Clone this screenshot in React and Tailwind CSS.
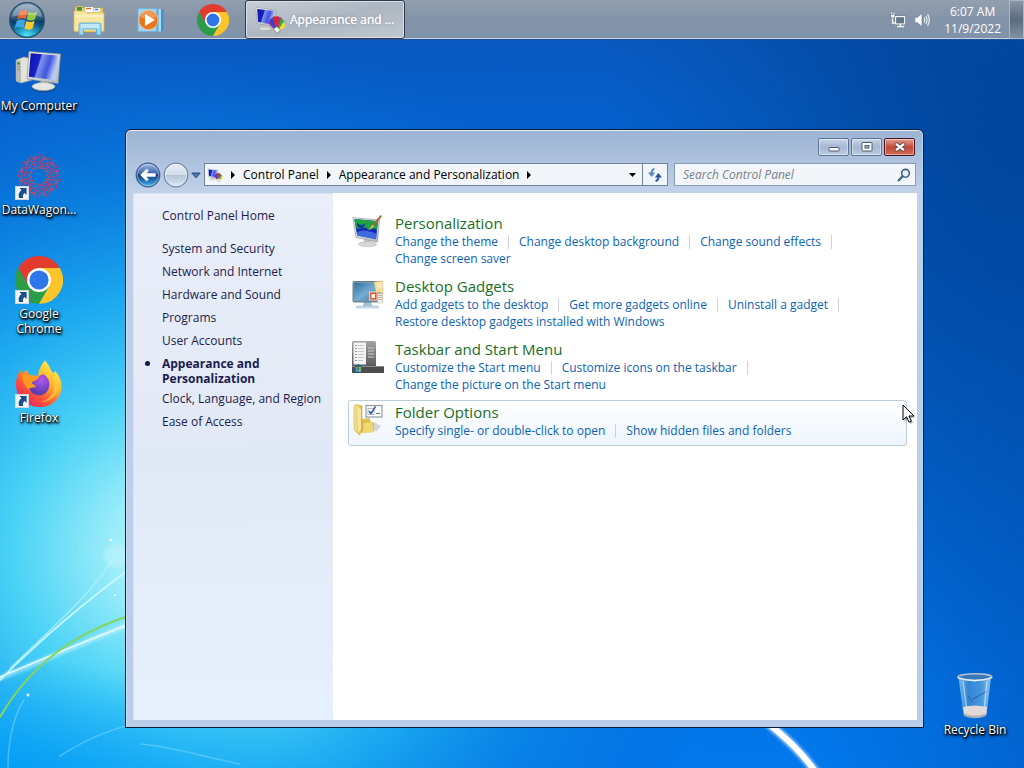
import clsx from 'clsx';

const sidebarLinks = [
	{ label: 'System and Security' },
	{ label: 'Network and Internet' },
	{ label: 'Hardware and Sound' },
	{ label: 'Programs' },
	{ label: 'User Accounts' },
	{ label: 'Appearance and Personalization', active: true },
	{ label: 'Clock, Language, and Region' },
	{ label: 'Ease of Access' }
];

const categories = [
	{
		title: 'Personalization',
		icon: PersonalizationIcon,
		links: ['Change the theme', 'Change desktop background', 'Change sound effects', 'Change screen saver']
	},
	{
		title: 'Desktop Gadgets',
		icon: GadgetsIcon,
		links: [
			'Add gadgets to the desktop',
			'Get more gadgets online',
			'Uninstall a gadget',
			'Restore desktop gadgets installed with Windows'
		]
	},
	{
		title: 'Taskbar and Start Menu',
		icon: TaskbarIcon,
		links: ['Customize the Start menu', 'Customize icons on the taskbar', 'Change the picture on the Start menu']
	},
	{
		title: 'Folder Options',
		icon: FolderOptionsIcon,
		links: ['Specify single- or double-click to open', 'Show hidden files and folders'],
		hovered: true
	}
];

const shortcuts = [
	{ label: 'My Computer', icon: ComputerIcon },
	{ label: 'DataWagon...', icon: DataWagonIcon, shortcut: true },
	{ label: 'Google Chrome', icon: ChromeIcon, shortcut: true },
	{ label: 'Firefox', icon: FirefoxIcon, shortcut: true }
];

function Wallpaper() {
	return (
		<svg className="absolute inset-0 h-full w-full" viewBox="0 0 1024 768" preserveAspectRatio="none" aria-hidden="true">
			<defs>
				<linearGradient id="wpBase" x1="0" y1="0" x2="0" y2="1">
					<stop offset="0" stopColor="#0a54b8" />
					<stop offset="0.15" stopColor="#0660cc" />
					<stop offset="0.6" stopColor="#046cdc" />
					<stop offset="1" stopColor="#0278ec" />
				</linearGradient>
				<radialGradient id="wpRight" gradientUnits="userSpaceOnUse" cx="0" cy="0" r="1" gradientTransform="translate(1024 130) scale(420 560)">
					<stop offset="0" stopColor="#003a84" stopOpacity="0.8" />
					<stop offset="0.5" stopColor="#00408e" stopOpacity="0.45" />
					<stop offset="1" stopColor="#00489c" stopOpacity="0" />
				</radialGradient>
				<linearGradient id="wpEdge" x1="0" y1="0" x2="1" y2="0">
					<stop offset="0.8" stopColor="#0048a8" stopOpacity="0" />
					<stop offset="1" stopColor="#0048a8" stopOpacity="0.4" />
				</linearGradient>
				<radialGradient id="wpGlow" gradientUnits="userSpaceOnUse" cx="0" cy="0" r="1" gradientTransform="translate(180 550) scale(560 520)">
					<stop offset="0" stopColor="#c4f8fc" />
					<stop offset="0.13" stopColor="#98ecf9" />
					<stop offset="0.3" stopColor="#4ad2f6" />
					<stop offset="0.5" stopColor="#1eaef2" stopOpacity="0.9" />
					<stop offset="0.72" stopColor="#0c88e4" stopOpacity="0.6" />
					<stop offset="1" stopColor="#0a66d0" stopOpacity="0" />
				</radialGradient>
				<radialGradient id="wpFloor" gradientUnits="userSpaceOnUse" cx="0" cy="0" r="1" gradientTransform="translate(0 790) scale(330 130)">
					<stop offset="0" stopColor="#009cf8" stopOpacity="0.9" />
					<stop offset="1" stopColor="#00a0f8" stopOpacity="0" />
				</radialGradient>
				<filter id="wpSoft" x="-20%" y="-20%" width="140%" height="140%">
					<feGaussianBlur stdDeviation="1.4" />
				</filter>
			</defs>
			<rect width="1024" height="768" fill="url(#wpBase)" />
			<rect width="1024" height="768" fill="url(#wpRight)" />
			<rect width="1024" height="768" fill="url(#wpEdge)" />
			<rect width="1024" height="768" fill="url(#wpGlow)" />
			<rect width="1024" height="768" fill="url(#wpFloor)" />
			<g fill="none" strokeLinecap="round">
				<path d="M0 678 C40 662 90 640 135 622" stroke="#dffbff" strokeWidth="5" opacity="0.5" filter="url(#wpSoft)" />
				<path d="M0 677 C40 660 90 639 135 622" stroke="#e4faff" strokeWidth="1.6" />
				<path d="M0 680 C40 640 90 598 135 565" stroke="#d4f8ff" strokeWidth="1.8" opacity="0.9" />
				<path d="M10 668 C50 630 95 590 112 560" stroke="#bdf2fc" strokeWidth="1.5" opacity="0.7" />
				<path d="M0 717 C30 666 72 633 135 614" stroke="#86d45c" strokeWidth="2" />
				<path d="M60 756 C85 740 105 731 140 722 M8 768 C8 740 14 715 24 700" stroke="#7fdcfb" strokeWidth="1.5" opacity="0.5" />
				<path d="M140 744 C170 746 200 756 240 764" stroke="#7fdcfb" strokeWidth="1.5" opacity="0.5" />
				<path d="M764 720 C785 737 802 752 817 774" stroke="#fff" strokeWidth="9" opacity="0.6" filter="url(#wpSoft)" />
				<path d="M764 720 C785 737 802 752 817 774" stroke="#fff" strokeWidth="6" />
			</g>
			<circle cx="116" cy="556" r="12" fill="#e8fdff" opacity="0.25" filter="url(#wpSoft)" />
			<g fill="#e8fdff">
				<circle cx="111" cy="540" r="1.5" />
				<circle cx="115" cy="595" r="1" />
				<circle cx="28" cy="695" r="1.5" />
			</g>
		</svg>
	);
}

function WindowsOrb() {
	return (
		<svg className="h-9 w-9" viewBox="0 0 36 36" aria-hidden="true">
			<defs>
				<linearGradient id="orbBody" x1="0" y1="0" x2="0" y2="1">
					<stop offset="0" stopColor="#8fa9bb" />
					<stop offset="0.45" stopColor="#2b5878" />
					<stop offset="0.55" stopColor="#0c4068" />
					<stop offset="1" stopColor="#0d7fae" />
				</linearGradient>
				<radialGradient id="orbGlow" cx="0.5" cy="1" r="0.55">
					<stop offset="0" stopColor="#58efff" />
					<stop offset="1" stopColor="#2cb8e0" stopOpacity="0" />
				</radialGradient>
			</defs>
			<circle cx="18" cy="18" r="17.3" fill="url(#orbBody)" stroke="#24506c" strokeWidth="1.2" />
			<circle cx="18" cy="18" r="16.5" fill="url(#orbGlow)" />
			<path d="M10.8 9.6 C13 7.6 15.8 7.7 18.4 9.2 L16.6 17 C13.8 15.6 11.2 15.7 8.2 17.4 Z" fill="#f0632c" />
			<path d="M19.6 9.8 C22.2 11.4 25 11.2 28.2 9.4 L26 17.2 C23 18.9 20.4 18.9 17.8 17.5 Z" fill="#94ca3c" />
			<path d="M7.8 18.8 C10.8 17 13.5 17 16.3 18.4 L14.4 26 C11.8 24.6 9 24.6 5.8 26.2 Z" fill="#41a4e8" />
			<path d="M17.4 18.9 C20 20.3 22.6 20.3 25.6 18.7 L23.5 26.4 C20.6 28 18 27.9 15.4 26.5 Z" fill="#fdca2e" />
			<path d="M3 15 C4 7 10 2.4 18 2.4 C26 2.4 32 7 33 15 C24 12 12 12 3 15 Z" fill="#fff" opacity="0.28" />
		</svg>
	);
}

function ExplorerIcon() {
	return (
		<svg className="h-8 w-8" viewBox="0 0 32 32" aria-hidden="true">
			<path d="M2 4 L4 2 H9 L11 4 H30 V28 H2 Z" fill="#eccf74" stroke="#c9a545" strokeWidth="0.7" />
			<path d="M4 3 H9 V7 H4 Z" fill="#3a9a4a" />
			<path d="M12 3 H20 V8 H12 Z" fill="#fff" />
			<path d="M13 3.8 H18 V5.2 H13 Z" fill="#e0683c" />
			<path d="M21 4 H27 V8 H21 Z" fill="#dff0fb" />
			<path d="M22 4.8 H25 V6.2 H22 Z" fill="#3a86d0" />
			<path d="M1 7 H12 L14 9 H31 V27 H1 Z" fill="#f8e7a2" stroke="#dcbd62" strokeWidth="0.7" />
			<path d="M2 12 H30" stroke="#fff8d6" />
			<path d="M6 21 Q6 19 8 19 H26 Q28 19 28 21 V31 H23.5 V25 H10.5 V31 H6 Z" fill="#9bd8f2" stroke="#4fa6cf" strokeWidth="0.8" />
			<path d="M8 21 H26 M8 23 H26" stroke="#e4f8ff" strokeWidth="1" />
		</svg>
	);
}

function MediaPlayerIcon() {
	return (
		<svg className="h-7 w-7" viewBox="0 0 28 28" aria-hidden="true">
			<path d="M20 3.5 H26.5 V25 H20 Z" fill="#3f93d4" />
			<path d="M18 3 H24 V25.5 H18 Z" fill="#a9dbf5" />
			<path d="M17 2.5 H21.5 V26 H17 Z" fill="#5aade2" />
			<rect x="1" y="2.5" width="18.5" height="23" fill="#a6d3ee" stroke="#6fb2dc" strokeWidth="0.8" />
			<circle cx="11.5" cy="14" r="9.6" fill="#e8761f" stroke="#f6b27a" strokeWidth="1" />
			<path d="M3 11 A9 9 0 0 1 20 11 Q11 15 3 11Z" fill="#fff" opacity="0.25" />
			<path d="M8 8 L18 14 L8 20 Z" fill="#fff" />
		</svg>
	);
}

function ChromeIcon({ className = 'h-12 w-12' }) {
	return (
		<svg className={className} viewBox="0 0 48 48" aria-hidden="true">
			<path d="M24 24 L44.8 12 A24 24 0 0 0 3.2 12 L13.6 30 Z" fill="#e33b2e" />
			<path d="M24 24 L13.6 30 L3.2 12 A24 24 0 0 0 24 48 L34.4 30 Z" fill="#2b9c48" />
			<path d="M24 12 H44.8 A24 24 0 0 1 24 48 L34.4 30 Z" fill="#fcc62b" />
			<circle cx="24" cy="24" r="12" fill="#fff" />
			<circle cx="24" cy="24" r="9.6" fill="#2f76e8" />
		</svg>
	);
}

function FirefoxIcon() {
	return (
		<svg className="h-12 w-12" viewBox="0 0 48 48" aria-hidden="true">
			<defs>
				<linearGradient id="ffBody" x1="0.85" y1="0.1" x2="0.2" y2="0.95">
					<stop offset="0" stopColor="#fff04a" />
					<stop offset="0.35" stopColor="#ffb22e" />
					<stop offset="0.65" stopColor="#ff5b36" />
					<stop offset="1" stopColor="#e8235f" />
				</linearGradient>
				<radialGradient id="ffGlobe" cx="0.6" cy="0.25" r="0.8">
					<stop offset="0" stopColor="#b455f0" />
					<stop offset="1" stopColor="#4b3aa8" />
				</radialGradient>
			</defs>
			<path
				d="M30 0.5 C34 5 35 8 37 12 C38.5 13 40 13.5 40 10.5 C47 18 48.5 29 44 36.5 C39.5 44 32 47.5 23.5 47 C10 46 1 36.5 1 24.5 C1 18 3 13.5 6.3 9.5 C6.3 11.5 6.8 12.6 7.5 13.2 C9 11.5 10.5 10.7 12.6 10 C12.5 11.7 13.2 13.6 15 15.2 C18 15 21 15.4 23 16.5 C23.5 11 25.5 5 30 0.5 Z"
				fill="url(#ffBody)"
			/>
			<path d="M29 14.5 C34 18 36 24 33 30 C30 35.5 24 36.5 19 34 C14.5 31.5 13.5 27 15.2 23 C16 20 20 19.5 23.5 18 C24 15.5 26 14 29 14.5 Z" fill="url(#ffGlobe)" />
			<path d="M7.5 13.4 C12 15 18 15.6 23 16.6 C24.5 20 18.5 20.5 16.5 23 C17.5 24 19.5 24.5 21 26.6 C17.5 29 14 26.5 14 30 C9 25 6 19 7.5 13.4 Z" fill="#ff9a1f" />
			<path d="M30 1 C32 8 38 13 39.5 21 C41.5 31 35 41 24 42 C37 43 45 33 43.5 22 C42.6 17 41 14 40 11.5 C39.6 13.5 38.2 13.4 37 12.4 C35 8 34 5 30 1Z" fill="#ffd43a" opacity="0.65" />
		</svg>
	);
}

function DataWagonIcon() {
	const spokes = Array.from({ length: 12 }, (_, i) => i * 30);
	return (
		<svg className="h-12 w-12" viewBox="0 0 48 48" aria-hidden="true">
			<g fill="none" stroke="#b8406c" strokeWidth="0.9">
				{spokes.map((angle) => (
					<g key={angle} transform={`rotate(${angle} 24 24)`}>
						<path d="M24 17 L21 12 L25 9 L23 4 L28 2.5" />
						<path d="M24 13 L28.5 10.5 L27 6 L30 5" />
						<path d="M20 8 L18.5 4 M22 16 L26 14" stroke="#d84a58" />
						<circle cx="25" cy="9" r="0.9" />
						<circle cx="21.5" cy="6" r="0.7" stroke="#d84a58" />
					</g>
				))}
			</g>
		</svg>
	);
}

function MonitorDefs() {
	return (
		<defs>
			<linearGradient id="screenBlue" x1="0" y1="0" x2="1" y2="0.3">
				<stop offset="0" stopColor="#0d13a8" />
				<stop offset="0.4" stopColor="#1721c4" />
				<stop offset="0.46" stopColor="#7f93ea" />
				<stop offset="0.75" stopColor="#3d55dc" />
				<stop offset="1" stopColor="#b8c8f8" />
			</linearGradient>
			<linearGradient id="bezel" x1="0" y1="0" x2="1" y2="1">
				<stop offset="0" stopColor="#f6f6f2" />
				<stop offset="1" stopColor="#b4b7b8" />
			</linearGradient>
		</defs>
	);
}

function ComputerIcon() {
	return (
		<svg className="h-12 w-12" viewBox="0 0 48 48" aria-hidden="true">
			<MonitorDefs />
			<path d="M1 12 L9 9 L17 11 V32 L6 35 L1 33 Z" fill="#e2e3dd" stroke="#9a9c9a" strokeWidth="0.6" />
			<path d="M1 12 L6 13 V35 L1 33 Z" fill="#b8bbb6" />
			<circle cx="3.4" cy="15.5" r="1.2" fill="#4a8a20" />
			<path d="M2 19 H5 M2 21.5 H5" stroke="#868986" strokeWidth="0.8" />
			<ellipse cx="29" cy="40.5" rx="12" ry="4" fill="#20303f" opacity="0.35" />
			<path d="M26 31 H33 L34 38 H25 Z" fill="#c9cbc8" />
			<ellipse cx="28.5" cy="38.5" rx="11.5" ry="4" fill="#e6e7e2" stroke="#a2a4a2" strokeWidth="0.6" />
			<path d="M14 3.5 L45.5 6 L43 35.5 L12 31 Z" fill="url(#bezel)" stroke="#90949a" strokeWidth="0.7" />
			<path d="M15.7 5.2 L42.6 7.4 L40.4 32.3 L13.8 28.7 Z" fill="url(#screenBlue)" />
		</svg>
	);
}

function PersonalizationIcon() {
	return (
		<svg className="h-8 w-8" viewBox="0 0 32 32" aria-hidden="true">
			<MonitorDefs />
			<path d="M13 22 H18 L19 29 H11 Z" fill="#c2c4c4" />
			<ellipse cx="15.5" cy="29.2" rx="9" ry="2.6" fill="#d9dad8" stroke="#a8aaaa" strokeWidth="0.5" />
			<path d="M0.8 2.5 L27.5 5 L25.5 27 L4 22.5 Z" fill="url(#bezel)" stroke="#8c9094" strokeWidth="0.6" />
			<path d="M2.3 4 L25.8 6.2 L24 24.2 L5.2 20.6 Z" fill="#1525b8" />
			<path d="M2.3 4 L25.8 6.2 L25 15 C21 11 19 17 15.5 14 C12 10.5 9 16 3.8 12.5 Z" fill="#1fa347" />
			<path d="M5 7.5 Q9 12 14 8 L11 13 Q7 14 5 11 Z" fill="#123a9c" />
			<path d="M4.8 17 Q13 13 24.7 19 L24 24.2 L5.2 20.6 Z" fill="#4a7be8" opacity="0.8" />
			<path d="M28.5 0 L30 1.3 L22 11.5 L19.6 13 L20.5 10 Z" fill="#a5683a" />
			<path d="M20.5 10 L22.2 11.3 L16.5 15.3 Z" fill="#f2c25c" />
		</svg>
	);
}

// Monitor with a colour fan, used on the task button and in the address bar
function AppearanceIcon({ className }) {
	return (
		<svg className={className} viewBox="0 0 32 32" aria-hidden="true">
			<MonitorDefs />
			<ellipse cx="11" cy="24.5" rx="6" ry="2" fill="#dcdedb" stroke="#a2a4a2" strokeWidth="0.5" />
			<path d="M9 19 H14 L14.5 24 H8.5 Z" fill="#c4c6c5" />
			<path d="M2 3.5 L22 6 L20 22.5 L3 19.5 Z" fill="url(#bezel)" stroke="#8c9094" strokeWidth="0.5" />
			<path d="M3.2 4.9 L20.5 7 L19 20.7 L4.1 18 Z" fill="url(#screenBlue)" />
			<path d="M23 28 L14 19 L17 14.5 Z" fill="#8a2bb8" />
			<path d="M23 28 L15.5 16 L20 12.5 Z" fill="#2b45d8" />
			<path d="M23 28 L18.5 12.8 L24 12.2 Z" fill="#d8272b" />
			<path d="M23 28 L23 12 L28 14 Z" fill="#c8257c" />
			<path d="M23 28 L27 13.5 L31 18 Z" fill="#35a83a" />
			<path d="M23 28 L30 17 L31 23 Z" fill="#f2df2a" />
			<path d="M19 25 L23 22.5 L26.5 26 L23.5 29.5 Z" fill="#f4f4f4" stroke="#555" strokeWidth="0.6" />
		</svg>
	);
}

function GadgetsIcon() {
	return (
		<svg className="h-8 w-8" viewBox="0 0 32 32" aria-hidden="true">
			<defs>
				<linearGradient id="gadgetScreen" x1="0" y1="0" x2="1" y2="1">
					<stop offset="0" stopColor="#2f6f9f" />
					<stop offset="0.5" stopColor="#76acd0" />
					<stop offset="1" stopColor="#3578ac" />
				</linearGradient>
			</defs>
			<path d="M12 23 H19 L20 28 H11 Z" fill="#9ec4da" />
			<path d="M5 28 H26 L27 30 H4 Z" fill="#cfe1ec" stroke="#8eb2c8" strokeWidth="0.5" />
			<rect x="1" y="3.5" width="29" height="20.5" rx="1" fill="#8fa0ac" stroke="#4f6473" strokeWidth="0.8" />
			<rect x="2.2" y="4.7" width="26.6" height="18" fill="url(#gadgetScreen)" />
			<path d="M22 4 L31 3 V15 L24 14 Z" fill="#f5df9a" stroke="#d8b964" strokeWidth="0.5" />
			<circle cx="28" cy="7" r="3" fill="#f6e9be" />
			<rect x="17.5" y="14" width="7.5" height="8" fill="#e2582a" stroke="#f7e5da" strokeWidth="0.8" />
			<rect x="19.5" y="16" width="3.5" height="4" fill="#fff" />
			<rect x="25.5" y="15.5" width="5" height="9.5" fill="#f2efe6" stroke="#b9b3a0" strokeWidth="0.5" />
			<path d="M26.5 17.5 H29.5 M26.5 19.5 H29.5 M26.5 21.5 H29.5" stroke="#cf8d52" strokeWidth="0.8" />
		</svg>
	);
}

function TaskbarIcon() {
	return (
		<svg className="h-8 w-8" viewBox="0 0 32 32" aria-hidden="true">
			<defs>
				<linearGradient id="menuDark" x1="0" y1="0" x2="0" y2="1">
					<stop offset="0" stopColor="#a3a3a3" />
					<stop offset="1" stopColor="#585858" />
				</linearGradient>
			</defs>
			<path d="M0 1.5 Q0 0 1.5 0 H22.5 Q24 0 24 1.5 V26 H0 Z" fill="url(#menuDark)" />
			<rect x="1.5" y="1.5" width="12.5" height="22" fill="#f4f4f4" />
			<path d="M3 4.5 H5 M3 7.5 H5 M3 10.5 H5 M3 13.5 H5 M3 16.5 H5 M3 19.5 H5" stroke="#8a9aa8" strokeWidth="1.2" />
			<path d="M6 4.5 H12 M6 7.5 H12 M6 10.5 H12 M6 13.5 H12 M6 16.5 H12 M6 19.5 H11" stroke="#c2c2c2" strokeWidth="0.9" />
			<path d="M16 7 H22 M16 10 H22 M16 13 H22 M16 16 H22" stroke="#d6d6d6" strokeWidth="0.9" />
			<rect y="25" width="32" height="7" fill="#4d4d4d" />
			<rect y="25" width="32" height="1" fill="#8c8c8c" />
			<circle cx="6.3" cy="28" r="4.4" fill="#15618c" />
			<path d="M3.6 25.8 H6 V27.8 H3.2 Z" fill="#ec6a33" />
			<path d="M6.6 25.8 H9.2 V27.8 H6.6 Z" fill="#8cc63e" />
			<path d="M3.4 28.4 H6 V30.6 H3.8 Z" fill="#48b0ea" />
			<path d="M6.6 28.4 H9.2 L8.6 30.6 H6.6 Z" fill="#fbd034" />
		</svg>
	);
}

function FolderOptionsIcon() {
	return (
		<svg className="h-8 w-8" viewBox="0 0 32 32" aria-hidden="true">
			<defs>
				<linearGradient id="folderBack" x1="0" y1="0" x2="1" y2="0">
					<stop offset="0" stopColor="#f7e59b" />
					<stop offset="1" stopColor="#d9b53e" />
				</linearGradient>
			</defs>
			<path d="M12 28 L25 27 L29 22 L22 18 Z" fill="#8a8a7a" opacity="0.3" />
			<path d="M10 15 L18 14 L18 17 L22 19 V28 L10 29 Z" fill="#dfc050" />
			<path d="M12 19 L20 18 L22 28 L11 29 Z" fill="#f0d878" />
			<path d="M2 3 Q2 0.5 5 0.5 L10 2 V27 L7.5 31 L4 28 L2 25 Z" fill="url(#folderBack)" stroke="#c6a23a" strokeWidth="0.5" />
			<path d="M5 2 L9 5 V25 L6.5 29 Q5.5 15 5 2Z" fill="#f6e6a0" />
			<rect x="14" y="1.5" width="16" height="11.5" fill="#fdfdfd" stroke="#8d949a" strokeWidth="1.1" />
			<rect x="16" y="4.5" width="6" height="6" fill="#fff" stroke="#9aa7b2" strokeWidth="0.7" />
			<path d="M17 7 L19 9.7 L23.5 2.5" fill="none" stroke="#2c5b9c" strokeWidth="1.5" />
			<path d="M24 9.5 H28" stroke="#6a7076" />
		</svg>
	);
}

function RecycleBinIcon() {
	return (
		<svg className="h-12 w-12" viewBox="0 0 48 48" aria-hidden="true">
			<defs>
				<linearGradient id="binGlass" x1="0" y1="0" x2="1" y2="0">
					<stop offset="0" stopColor="#8cc4ee" />
					<stop offset="0.3" stopColor="#3d8ad4" />
					<stop offset="0.7" stopColor="#519fe2" />
					<stop offset="1" stopColor="#a4d2f4" />
				</linearGradient>
			</defs>
			<path d="M7.5 5 L12.5 43 Q24 48 35.5 43 L40 5 Z" fill="url(#binGlass)" opacity="0.85" />
			<path d="M12 35 Q24 32 36 35 L35.2 42 Q24 47 13 42 Z" fill="#e4d7d8" />
			<path d="M13 41.5 Q24 46 35.4 41.5 L35 44 Q24 48.5 13.2 44 Z" fill="#a8b0b8" />
			<path d="M17 24 L22 30 M22 27 L36 19" stroke="#2a5f9c" strokeWidth="1" fill="none" />
			<path d="M12 9 L16 39" stroke="#d4ebfa" strokeWidth="1.3" opacity="0.7" />
			<path d="M36 9 L33 39" stroke="#d4ebfa" strokeWidth="1.3" opacity="0.7" />
			<ellipse cx="23.8" cy="5" rx="17" ry="3.3" fill="#3a78b8" stroke="#b0c4d4" strokeWidth="1.6" />
			<path d="M7 5.5 Q23.8 12 40.5 5.5" fill="none" stroke="#e9f1f7" strokeWidth="1.3" />
		</svg>
	);
}

function ShortcutArrow() {
	return (
		<svg className="absolute bottom-0 left-0 h-[14px] w-[14px]" viewBox="0 0 14 14" aria-hidden="true">
			<rect x="0.5" y="0.5" width="13" height="13" fill="#f3f6f8" stroke="#d0d8de" />
			<path d="M4.4 2 H11.6 V9 L9.6 7 C8 8.4 7.4 9.8 8.2 12 H4.4 C2.8 9 4 6.3 6.4 4 Z" fill="#1a4f8c" />
		</svg>
	);
}

function NetworkIcon() {
	return (
		<svg className="h-4 w-4" viewBox="0 0 16 16" aria-hidden="true">
			<rect x="4.6" y="3.6" width="11" height="9.4" fill="#3c4856" />
			<rect x="5.5" y="4.5" width="9.2" height="7.5" fill="#66778a" stroke="#f6f8fa" strokeWidth="1.3" />
			<path d="M7 14.6 H14 M10.3 12 V14.6 M2.6 6 V11 H5" stroke="#f6f8fa" strokeWidth="1.3" fill="none" />
			<path d="M0.5 2.2 H5 V4 Q5 6.2 2.7 6.2 Q0.5 6.2 0.5 4 Z" fill="#f6f8fa" stroke="#3c4856" strokeWidth="0.5" />
			<path d="M1.5 0.5 V2.2 M4 0.5 V2.2" stroke="#f6f8fa" strokeWidth="1" />
		</svg>
	);
}

function SpeakerIcon() {
	return (
		<svg className="h-4 w-4" viewBox="0 0 16 16" aria-hidden="true">
			<path d="M0.8 5.3 H3.5 L8 1.3 V14.7 L3.5 10.7 H0.8 Z" fill="#fafbfc" stroke="#56657a" strokeWidth="0.5" />
			<path d="M10 5.5 Q11.5 8 10 10.5 M11.8 3.8 Q14.2 8 11.8 12.2 M13.6 2.2 Q17 8 13.6 13.8" fill="none" stroke="#f1f4f6" strokeWidth="1.1" />
		</svg>
	);
}

function NavOrb({ active }) {
	return (
		<svg className="h-[26px] w-[26px]" viewBox="0 0 26 26" aria-hidden="true">
			<defs>
				<linearGradient id="navBlue" x1="0" y1="0" x2="0" y2="1">
					<stop offset="0" stopColor="#a4bce4" />
					<stop offset="0.45" stopColor="#3563ad" />
					<stop offset="0.5" stopColor="#0f3a84" />
					<stop offset="1" stopColor="#3fb4f0" />
				</linearGradient>
				<linearGradient id="navPale" x1="0" y1="0" x2="0" y2="1">
					<stop offset="0" stopColor="#e6edf6" />
					<stop offset="0.48" stopColor="#d3deeb" />
					<stop offset="0.52" stopColor="#b4c4d8" />
					<stop offset="1" stopColor="#dfe9f3" />
				</linearGradient>
			</defs>
			<circle cx="13" cy="13" r="11.8" fill={active ? 'url(#navBlue)' : 'url(#navPale)'} stroke={active ? '#405f92' : '#7488a4'} strokeWidth="1.2" />
			<circle cx="13" cy="13" r="10.6" fill="none" stroke="#fff" strokeWidth="0.8" opacity="0.5" />
			{active && <path d="M5.2 13 L11.6 6.8 L13.8 8.8 L11.4 11.2 H20.6 V14.8 H11.4 L13.8 17.2 L11.6 19.2 Z" fill="#fff" />}
		</svg>
	);
}

function Crumb({ children }) {
	return (
		<>
			<svg className="h-2 w-1 shrink-0" viewBox="0 0 4 8" aria-hidden="true">
				<path d="M0 0 L4 4 L0 8 Z" fill="#000" />
			</svg>
			{children && (
				<a href="#" className="truncate text-black">
					{children}
				</a>
			)}
		</>
	);
}

function Taskbar() {
	return (
		<header className="relative z-10 flex h-10 items-stretch border-b border-[#1c50a0] bg-linear-to-b from-[#929fae] via-[#8494a8] to-[#8093aa] shadow-[inset_0_-1px_0_#c8d3de]">
			<button type="button" aria-label="Start" className="flex w-[54px] items-center justify-center">
				<WindowsOrb />
			</button>
			<div className="ml-1 flex">
				<button type="button" aria-label="Windows Explorer" className="flex w-[62px] items-center justify-center">
					<ExplorerIcon />
				</button>
				<button type="button" aria-label="Media Player" className="flex w-[62px] items-center justify-center">
					<MediaPlayerIcon />
				</button>
				<button type="button" aria-label="Google Chrome" className="flex w-[62px] items-center justify-center">
					<ChromeIcon className="h-8 w-8" />
				</button>
			</div>
			<button
				type="button"
				className="ml-px flex w-[160px] items-center gap-1 rounded-[3px] border border-[#2c3a4c] bg-linear-to-br from-[#c9ced6] via-[#adb6c1] to-[#c0c8d1] pl-2 font-medium text-white shadow-[inset_0_0_0_1px_#d9dfe6]"
			>
				<AppearanceIcon className="h-8 w-8 shrink-0" />
				<span className="truncate [text-shadow:0_0_1px_#fff,0_0_3px_#6b7785]">Appearance and ...</span>
			</button>
			<div className="ml-auto flex items-center">
				<button type="button" aria-label="Network" className="mr-2">
					<NetworkIcon />
				</button>
				<button type="button" aria-label="Volume">
					<SpeakerIcon />
				</button>
				<button type="button" className="px-3.5 text-center leading-[17px] text-white">
					<span className="block">6:07 AM</span>
					<span className="block">11/9/2022</span>
				</button>
			</div>
			<button
				type="button"
				aria-label="Show desktop"
				className="-ml-1.5 w-[15px] border border-[#a9b6c4] bg-linear-to-b from-[#8795a6] via-[#5c6b7e] to-[#8191a5]"
			/>
		</header>
	);
}

function DesktopIcon({ label, icon: Icon, shortcut }) {
	return (
		<button type="button" className="flex w-[78px] flex-col items-center gap-0.5 leading-[15px] text-white">
			<span className="relative">
				<Icon />
				{shortcut && <ShortcutArrow />}
			</span>
			<span className="[text-shadow:0_1px_2px_#000,1px_1px_2px_#000,1px_2px_3px_#000]">{label}</span>
		</button>
	);
}

function WindowHeader() {
	const caption = 'flex h-[18px] w-[31px] items-center justify-center rounded-[2px] border shadow-[inset_0_0_0_1px_rgba(255,255,255,0.45)]';
	return (
		<div className="flex flex-col pt-2 pb-[7px]">
			<div className="flex justify-end gap-0.5 pr-0.5 pb-[7px]">
				<button type="button" aria-label="Minimize" className={clsx(caption, 'border-[#5d7393] bg-linear-to-b from-[#c6d4e7] via-[#a5b8d3] to-[#bccce2]')}>
					<svg className="h-3 w-3" viewBox="0 0 12 12" aria-hidden="true">
						<rect x="1" y="6.5" width="10" height="3.5" rx="0.5" fill="#fff" stroke="#4c5a6e" />
					</svg>
				</button>
				<button type="button" aria-label="Maximize" className={clsx(caption, 'border-[#5d7393] bg-linear-to-b from-[#c6d4e7] via-[#a5b8d3] to-[#bccce2]')}>
					<svg className="h-3 w-3" viewBox="0 0 12 12" aria-hidden="true">
						<rect x="1" y="1.5" width="10" height="8.5" rx="0.5" fill="#fff" stroke="#4c5a6e" />
						<rect x="4" y="4.5" width="4" height="2.5" fill="#a5b8d3" stroke="#4c5a6e" />
					</svg>
				</button>
				<button type="button" aria-label="Close" className={clsx(caption, 'border-[#4a1420] bg-linear-to-b from-[#e0a193] via-[#c04a3a] to-[#d26b52]')}>
					<svg className="h-3 w-3" viewBox="0 0 12 12" aria-hidden="true">
						<path d="M1.5 2.5 L10.5 9.5 M10.5 2.5 L1.5 9.5" stroke="#5c4448" strokeWidth="4" />
						<path d="M2 2.9 L10 9.1 M10 2.9 L2 9.1" stroke="#fff" strokeWidth="2.4" />
					</svg>
				</button>
			</div>
			<div className="flex h-[23px] items-center">
				<div className="flex items-center gap-0.5 pl-0.5">
					<button type="button" aria-label="Back">
						<NavOrb active />
					</button>
					<button type="button" aria-label="Forward">
						<NavOrb />
					</button>
				</div>
				<button type="button" aria-label="Recent pages" className="ml-0.5 mr-[3px]">
					<svg className="h-2.5 w-2.5" viewBox="0 0 10 10" aria-hidden="true">
						<path d="M0.8 3 H9.2 L5 7.8 Z" fill="#4c7cb4" stroke="#24487c" />
					</svg>
				</button>
				<div className="flex h-full min-w-0 flex-1 border border-[#6f8298] bg-[#f2f6fb]">
					<div className="flex min-w-0 flex-1 items-center gap-2 pl-0.5">
						<AppearanceIcon className="h-4 w-4 shrink-0" />
						<Crumb>Control Panel</Crumb>
						<Crumb>Appearance and Personalization</Crumb>
						<Crumb />
						<button type="button" aria-label="Previous locations" className="ml-auto mr-1.5">
							<svg className="h-1 w-[7px]" viewBox="0 0 7 4" aria-hidden="true">
								<path d="M0 0 H7 L3.5 4 Z" fill="#000" />
							</svg>
						</button>
					</div>
					<button type="button" aria-label="Refresh" className="flex w-[25px] items-center justify-center border-l border-[#6f8298]">
						<svg className="h-3.5 w-3.5" viewBox="0 0 14 14" aria-hidden="true">
							<path d="M6.4 0.8 Q3.6 1.6 3.6 5" fill="none" stroke="#5b86c8" strokeWidth="1.9" />
							<path d="M0 4.6 H7.2 L3.6 9 Z" fill="#5b86c8" />
							<path d="M7.6 13.2 Q10.4 12.4 10.4 9" fill="none" stroke="#2c5598" strokeWidth="1.9" />
							<path d="M6.8 9.4 H14 L10.4 5 Z" fill="#2c5598" />
						</svg>
					</button>
				</div>
				<label className="ml-1.5 mr-px flex h-full w-[242px] items-center border border-[#8a9db4] bg-[#f2f6fb] pr-1 pl-2">
					<input
						type="text"
						aria-label="Search Control Panel"
						placeholder="Search Control Panel"
						className="min-w-0 flex-1 bg-transparent outline-none placeholder:text-[#7a7f86] placeholder:italic"
					/>
					<svg className="h-3.5 w-3.5" viewBox="0 0 14 14" aria-hidden="true">
						<circle cx="8.5" cy="5.3" r="3.9" fill="#e6f1fa" stroke="#3d6384" strokeWidth="1.6" />
						<path d="M5.6 8.3 L1.6 12.4" stroke="#3d6384" strokeWidth="2.2" strokeLinecap="round" />
					</svg>
				</label>
			</div>
		</div>
	);
}

function Sidebar() {
	return (
		<nav className="w-[200px] shrink-0 bg-linear-to-b from-[#e9eef8] via-[#e2e9f6] to-[#e6f0fc] pt-[15px] pr-1 pl-[29px] leading-[15px] shadow-[inset_1px_1px_0_#d4e6f4]">
			<a href="#" className="block text-[#1b1c4f]">
				Control Panel Home
			</a>
			<ul className="mt-[18px]">
				{sidebarLinks.map(({ label, active }) => (
					<li key={label} className={clsx('relative', active ? 'pb-[5px]' : 'pb-2')}>
						{active && <span className="absolute top-[5px] left-[-17px] h-[5px] w-[5px] rounded-full bg-[#15163f]" />}
						<a href="#" className={clsx('block text-[#1b1c4f]', active && 'w-[110px] font-bold')}>
							{label}
						</a>
					</li>
				))}
			</ul>
		</nav>
	);
}

function Category({ title, icon: Icon, links, hovered }) {
	return (
		<section
			className={clsx(
				'flex items-start gap-[11px] rounded-[3px] border pt-px pb-1.5 pl-[3px]',
				hovered ? 'border-[#bccbd8] bg-linear-to-b from-white to-[#edf5fd]' : 'border-transparent'
			)}
		>
			<span className="shrink-0 pt-0.5">
				<Icon />
			</span>
			<div className="min-w-0">
				<h2 className="text-[15px] leading-5">
					<a href="#" className="text-[#1a6e1f]">
						{title}
					</a>
				</h2>
				<ul className="flex flex-wrap leading-[17px] text-[#0b63b5]">
					{links.map((link, i) => (
						<li key={link} className="flex items-center">
							<a href="#">{link}</a>
							{i < links.length - 1 && <span className="mx-[10px] h-3.5 w-px bg-[#cfd3d8]" />}
						</li>
					))}
				</ul>
			</div>
		</section>
	);
}

function ControlPanelWindow() {
	return (
		<div className="absolute top-[89px] right-[100px] bottom-10 left-[125px] flex flex-col rounded-t-md border border-[#0c1c38] bg-linear-to-b from-[#9cb3d3] via-[#bfd0e8] via-10% to-[#b9cde8] pr-1.5 pb-[7px] pl-[7px] shadow-[inset_0_1px_0_#e6eef8,inset_1px_0_0_#cfe0f2,inset_-1px_0_0_#a8ddf5]">
			<WindowHeader />
			<div className="flex min-h-0 flex-1 bg-white">
				<Sidebar />
				<main className="min-w-0 flex-1 overflow-hidden pt-[18px] pr-[10px] pl-[15px]">
					{categories.map((category) => (
						<Category key={category.title} {...category} />
					))}
				</main>
			</div>
		</div>
	);
}

export default function App() {
	return (
		<div className="relative flex min-h-screen flex-col overflow-hidden bg-[#0464d0] font-['Open_Sans','Noto_Sans',sans-serif] text-xs">
			<Wallpaper />
			<Taskbar />
			<div className="relative flex-1">
				<div className="absolute top-2 left-0 flex flex-col">
					{shortcuts.map((item) => (
						<div key={item.label} className="h-[104px]">
							<DesktopIcon {...item} />
						</div>
					))}
				</div>
				<div className="absolute right-[10px] bottom-[31px]">
					<DesktopIcon label="Recycle Bin" icon={RecycleBinIcon} />
				</div>
				<ControlPanelWindow />
				<svg className="pointer-events-none absolute top-[364px] right-[108px] h-5 w-[14px]" viewBox="0 0 14 20" aria-hidden="true">
					<path d="M2.5 2 V18 L6 14.8 L8.4 20 L11 19 L8.8 14 L13.6 13.6 Z" fill="#000" opacity="0.25" />
					<path d="M1 1 V16 L4.6 12.8 L7 18.2 L9.4 17.2 L7 12 H12 Z" fill="#fff" stroke="#000" />
				</svg>
			</div>
		</div>
	);
}
